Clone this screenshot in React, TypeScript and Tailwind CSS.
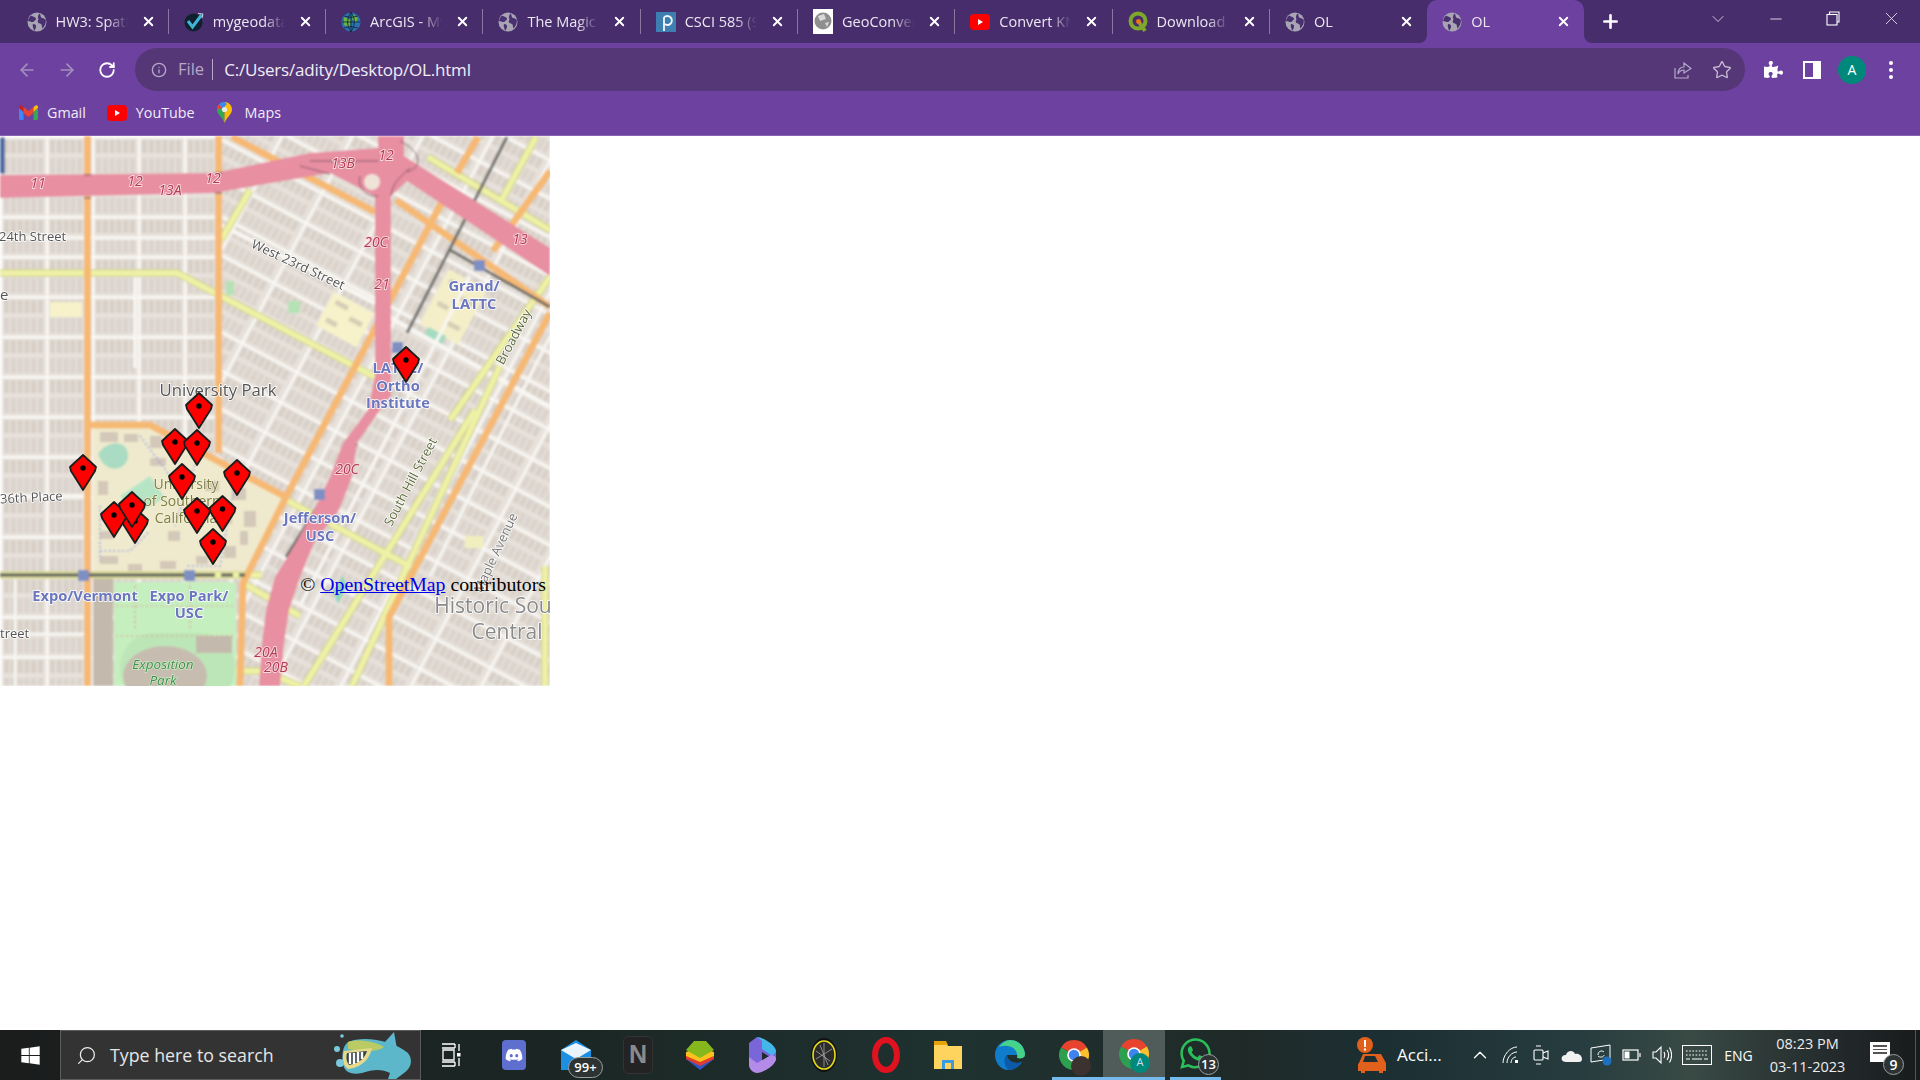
import React from 'react'
import { ArrowLeft, ArrowRight, RotateCw, Info, Star, X, Plus, ChevronDown, Minus, ChevronUp, Search } from 'lucide-react'
import { FaPuzzlePiece, FaWindows, FaDiscord, FaWhatsapp } from 'react-icons/fa'

function GlobeIcon() {
    return (
        <svg width="20" height="20" viewBox="0 0 20 20">
            <circle cx="10" cy="10" r="9.5" fill="#a9a4b3" />
            <path d="M4 3.5 C6 5 8 4.5 9 6.5 C9.5 8 7 8.5 6.5 10 C5 10.5 2.5 9 1 9 C1.5 6.5 2.5 5 4 3.5Z" fill="#4a3070" />
            <path d="M12.5 1.5 C14 2.5 13 5 15 6 C17 6.5 18 6.5 18.8 8 C19 11 18 14 15.5 16.5 C14.5 14 15.5 12.5 13 11.5 C10.5 11 10 9 11.5 7.5 C10.5 5 11 3 12.5 1.5Z" fill="#4a3070" />
            <path d="M6 12 C8 12 9.5 13 9 15 C8.5 17 8 18 7 18.8 C6.5 16 5 14 6 12Z" fill="#4a3070" />
        </svg>
    )
}

function YoutubeIcon() {
    return (
        <svg width="20" height="16" viewBox="0 0 20 16">
            <rect width="20" height="16" rx="4" fill="#fe0000" />
            <path d="M8 5 L13 8 L8 11Z" fill="#fff" />
        </svg>
    )
}

function ChromeIcon({ badge }: { badge: React.ReactNode }) {
    return (
        <div className="relative w-[30px] h-[36px] flex items-start">
            <svg width="30" height="36" viewBox="0 0 24 29">
                <path d="M12 12 L1.6 6 A12 12 0 0 1 22.4 6Z" fill="#e8432f" transform="translate(0,2.5)" />
                <path d="M12 12 L22.4 6 A12 12 0 0 1 12 24Z" fill="#fbc02d" transform="translate(0,2.5)" />
                <path d="M12 12 L12 24 A12 12 0 0 1 1.6 6Z" fill="#2e9e4f" transform="translate(0,2.5)" />
                <circle cx="12" cy="14.5" r="5.5" fill="#fff" />
                <circle cx="12" cy="14.5" r="4.2" fill="#3f83ee" />
            </svg>
            {badge}
        </div>
    )
}

const tabs = [
    {
        title: 'HW3: Spatial',
        icon: <GlobeIcon />,
    },
    {
        title: 'mygeodata',
        icon: (
            <svg width="20" height="20" viewBox="0 0 20 20">
                <circle cx="9.5" cy="10.5" r="9" fill="#10202c" />
                <path d="M4 9 L8.5 15 L17.5 3" fill="none" stroke="#40b5d8" strokeWidth="3" />
                <path d="M14 1.5 L19 2 L18 6" fill="none" stroke="#cfd8dc" strokeWidth="1" />
            </svg>
        ),
    },
    {
        title: 'ArcGIS - My',
        icon: (
            <svg width="20" height="22" viewBox="0 0 20 22">
                <circle cx="10" cy="11" r="9.5" fill="#2b74b4" />
                <path d="M3 6 L10 9 L9 16 L3 14Z M12 3 L17 7 L15 12 L11 8Z" fill="#6cb33f" />
                <path d="M1 11 H19 M10 1 V21 M3 5 Q10 8 17 5 M3 17 Q10 14 17 17 M10 1 Q3 11 10 21 M10 1 Q17 11 10 21" fill="none" stroke="#10222e" strokeWidth="0.8" />
            </svg>
        ),
    },
    {
        title: 'The Magic',
        icon: <GlobeIcon />,
    },
    {
        title: 'CSCI 585 (9',
        icon: (
            <svg width="20" height="20" viewBox="0 0 20 20">
                <rect width="20" height="20" fill="#3d7fb0" />
                <path d="M8 19 V5.5 A4.5 4.5 0 1 1 8 11.5" fill="none" stroke="#f2f6f9" strokeWidth="1.8" />
            </svg>
        ),
    },
    {
        title: 'GeoConverter',
        icon: (
            <svg width="20" height="25" viewBox="0 0 20 25">
                <rect width="20" height="25" fill="#fff" />
                <circle cx="10" cy="12" r="8.5" fill="#8f8f8f" />
                <path d="M5 7 L11 5 L13 10 L7 12Z M12 14 L16 13 L14 18Z" fill="#d9d9d9" />
            </svg>
        ),
    },
    {
        title: 'Convert KML',
        icon: <YoutubeIcon />,
    },
    {
        title: 'Download QGIS',
        icon: (
            <svg width="20" height="22" viewBox="0 0 20 22">
                <circle cx="10" cy="10" r="7.5" fill="none" stroke="#7ea82a" strokeWidth="4" />
                <path d="M11 11 L17 20" stroke="#7ea82a" strokeWidth="4" />
                <circle cx="10.5" cy="10.5" r="2.4" fill="#ee7913" />
            </svg>
        ),
    },
    {
        title: 'OL',
        icon: <GlobeIcon />,
    },
    {
        title: 'OL',
        icon: <GlobeIcon />,
        active: true,
    },
]

function TabItem({ title, icon, active, last }: { title: string; icon: React.ReactNode; active?: boolean; last?: boolean }) {
    return (
        <div className={active
            ? 'relative w-[157.3px] h-full flex items-center pl-[15px] bg-[#6c41a0] rounded-t-[10px]'
            : 'relative w-[157.3px] h-full flex items-center pl-[15px]'}
        >
            {active && (
                <>
                    <div className="absolute -left-2 bottom-0 size-2 bg-[#6c41a0]">
                        <div className="size-full bg-[#472d6b] rounded-br-lg" />
                    </div>
                    <div className="absolute -right-2 bottom-0 size-2 bg-[#6c41a0]">
                        <div className="size-full bg-[#472d6b] rounded-bl-lg" />
                    </div>
                </>
            )}
            <div className="w-5 flex justify-center shrink-0 overflow-visible">{icon}</div>
            <div className="ml-[9px] w-[72px] overflow-hidden whitespace-nowrap text-[14.5px] text-[#ece7f2] [mask-image:linear-gradient(to_right,black_70%,transparent)]">
                {title}
            </div>
            <X size={15} strokeWidth={3} className="ml-[13px] text-white shrink-0" />
            {!last && !active && <div className="absolute right-0 top-[9px] h-[25px] w-px bg-[#8a779f]" />}
        </div>
    )
}

const streets: [string, string, number][] = [
    ['M0 102H216', '#f8f6f2', 3.5],
    ['M135 140V232', '#f8f6f2', 3.5],
    ['M0 360H85', '#f8f6f2', 3.5],
    ['M221 89L375 167', '#f8f6f2', 4.5],
    ['M389 181L550 271', '#f8f6f2', 4.5],
    ['M0 498H85', '#f8f6f2', 3],
    ['M15 440V550', '#f8f6f2', 2.5],
    ['M470 140L300 470', '#f8f6f2', 3.5],
    ['M550 200L430 440', '#f8f6f2', 3],
]

const yellowRoads = [
    'M0 137H177L375 241',
    'M286 364L411 431',
    'M250 54L221 104',
    'M428 21L550 94',
    'M536 1L500 67',
    'M550 141L450 284',
    'M475 274L304 550',
    'M500 230L352 550',
    'M0 439H262',
    'M545 430V550',
    'M241 446L300 480',
    'M236 535H262L300 550',
]

const orangeRoads = [
    'M87.5 0V550',
    'M218.6 0V317',
    'M87 289H150L286 361',
    'M443 64L286 361L243 447L240 550',
    'M232 1L375 76',
    'M396 64L550 171',
    'M478 1L457 37',
    'M550 35L493 115',
    'M550 177L389 481V550',
]

const pinkLabels: [string, number, number][] = [
    ['11', 38, 52], ['12', 135, 50], ['13A', 170, 59], ['12', 213, 47], ['13B', 343, 32], ['12', 386, 24],
    ['13', 520, 108], ['20C', 376, 111], ['21', 382, 153], ['20C', 347, 338], ['20A', 266, 521], ['20B', 276, 536],
]

const blueLabels: [string, number, number][] = [
    ['Grand/', 474, 155], ['LATTC', 474, 173], ['LATTC/', 398, 237], ['Ortho', 398, 255], ['Institute', 398, 272],
    ['Jefferson/', 320, 387], ['USC', 320, 405], ['Expo/Vermont', 85, 465], ['Expo Park/', 189, 465], ['USC', 189, 482],
]

const markers: [number, number][] = [
    [406, 224], [199, 270], [83, 332], [175, 306], [197, 307], [182, 341], [237, 337], [135, 385], [114, 379], [132, 369], [197, 375], [222.5, 373], [213, 406],
]

const campusBuildings: [number, number, number, number][] = [
    [100, 296, 18, 10], [124, 298, 14, 8], [150, 300, 12, 12], [98, 345, 10, 14], [150, 322, 16, 8], [205, 345, 14, 10],
    [232, 352, 14, 12], [218, 372, 14, 16], [244, 375, 12, 16], [100, 395, 14, 8], [100, 420, 18, 8], [128, 428, 14, 7],
    [160, 425, 16, 8], [224, 410, 12, 12], [240, 395, 8, 14], [196, 420, 12, 8], [168, 395, 12, 10], [150, 350, 10, 6],
]

function parcels(w: number, h: number) {
    const out: React.ReactNode[] = []
    const count = Math.floor((w - 4) / 6.8)
    for (let c = 0; c < count; c++) {
        out.push(<rect key={'a' + c} x={4 + c * 6.8} y={4} width="5" height={h / 2 - 7} fill="#d8d0c8" />)
        out.push(<rect key={'b' + c} x={4 + c * 6.8} y={h / 2 + 2} width="5" height={h / 2 - 5} fill="#dbd3cc" />)
    }
    return out
}

function MapDrawing() {
    return (
        <svg width="550" height="550" viewBox="0 0 550 550" className="block font-['Open_Sans']">
            <defs>
                <pattern id="blocks" width="46" height="40" patternUnits="userSpaceOnUse">
                    <rect width="46" height="40" fill="#e6e1da" />
                    {parcels(46, 40)}
                    <path d="M0 1H46M1 0V40" stroke="#fbf9f6" strokeWidth="2.8" />
                </pattern>
                <pattern id="blocksTilt" width="62" height="34" patternUnits="userSpaceOnUse" patternTransform="rotate(28)">
                    <rect width="62" height="34" fill="#e6e1da" />
                    {parcels(62, 34)}
                    <path d="M0 1H62M1 0V34" stroke="#fbf9f6" strokeWidth="2.8" />
                </pattern>
                <filter id="soft">
                    <feGaussianBlur stdDeviation="0.8" />
                </filter>
                <filter id="softer">
                    <feGaussianBlur stdDeviation="0.35" />
                </filter>
            </defs>
            <g filter="url(#soft)">
                <rect width="550" height="550" fill="url(#blocks)" />
                <polygon points="221,0 550,0 550,550 240,550 243,447 286,361 219,320" fill="url(#blocksTilt)" />
                <polygon points="93,292 150,292 219,325 286,361 245,440 93,440" fill="#efeacd" />
                {campusBuildings.map(([x, y, w, h]) => (
                    <rect key={x + '-' + y} x={x} y={y} width={w} height={h} fill="#d4c8b8" />
                ))}
                <path d="M98 318C108 302 130 304 128 322C124 336 105 338 98 318Z" fill="#a9dcc3" />
                <path d="M120 360L150 340L165 362L135 378Z" fill="#b6e5c6" />
                <path d="M100 415H130L150 395M140 300L170 340M235 345L220 430H185M100 370V425M200 312L175 390" stroke="#6f7ff0" strokeWidth="1.6" strokeDasharray="1.5 3" fill="none" />
                <g transform="rotate(28 454 170)">
                    <rect x="432" y="140" width="44" height="62" fill="#f4efc8" />
                    <path d="M438 150H452M456 160H470M438 175H450M455 188H470" stroke="#d8cdb6" strokeWidth="5" />
                </g>
                <g transform="rotate(28 344 184)">
                    <rect x="322" y="164" width="46" height="38" fill="#f7f2c9" />
                    <path d="M328 172H342M348 180H362M328 192H340" stroke="#d8cdb6" strokeWidth="5" />
                </g>
                <rect x="50" y="166" width="32" height="15" fill="#f7f2c9" />
                <rect x="425" y="195" width="20" height="11" fill="#a3dcc1" transform="rotate(28 435 200)" />
                <rect x="226" y="145" width="8" height="14" fill="#b5e2b4" />
                <rect x="288" y="165" width="12" height="12" fill="#b5e2b4" />
                <rect x="93" y="442" width="20" height="108" fill="#c4b9ad" />
                <rect x="114" y="446" width="122" height="104" fill="#c6efc0" />
                <rect x="120" y="497" width="115" height="70" rx="34" fill="#bde6b8" />
                <ellipse cx="165" cy="540" rx="42" ry="30" fill="#c7bcb0" />
                <rect x="196" y="500" width="36" height="17" fill="#c4b9ad" />
                <path d="M116 470H235M135 450V495M190 450V495M116 500H235" stroke="#dd8d80" strokeWidth="1.2" strokeDasharray="2 3" fill="none" />
                <path d="M333 455L343 440L347 450L338 468Z" fill="#8fd6bc" />
                <rect x="465" y="400" width="18" height="12" fill="#f2efbf" />
                {streets.map(([d, color, width]) => (
                    <path key={d} d={d} stroke={color} strokeWidth={width} fill="none" />
                ))}
                {yellowRoads.map((d) => (
                    <path key={d} d={d} stroke="#cdcf86" strokeWidth="7.5" fill="none" />
                ))}
                {yellowRoads.map((d) => (
                    <path key={d + 'in'} d={d} stroke="#eef1a6" strokeWidth="5.5" fill="none" />
                ))}
                {orangeRoads.map((d) => (
                    <path key={d} d={d} stroke="#f6b973" strokeWidth="7" fill="none" />
                ))}
                <path d="M0 439H245" stroke="#666660" strokeWidth="3.5" fill="none" strokeDasharray="215 6 12 6" />
                <path d="M507 1L407 197M450 114L550 171M357 307L286 421" stroke="#6f6f6c" strokeWidth="3" fill="none" />
                <path d="M0 39L214 37L310 17L378 12L378 0H404L404 20L550 112V140L407 45L391 60V260L380 274L357 307L352 341L339 374L314 407L300 441L289 474L284 507L280 550H259L262 507L266 474L275 441L296 407L314 374L330 341L343 307L368 274L375 240V60L330 37L214 57L0 62Z" fill="#e88fa2" />
                <path d="M310 25H378M330 38L300 30M360 40C356 55 372 62 378 60M410 32C396 44 392 50 391 60M400 5C420 15 425 30 407 36" stroke="#7c5460" strokeWidth="1" fill="none" />
                <path d="M84 39H91M84 62H91M215 37H222M215 57H222" stroke="#9c6a70" strokeWidth="1.5" />
                <circle cx="372" cy="46" r="8" fill="#efe3d8" />
                {[[474, 124], [392, 206], [314, 353], [78, 434], [184, 434]].map(([x, y]) => (
                    <rect key={x} x={x} y={y} width="11" height="11" fill="#7e8fc4" />
                ))}
                <rect x="0" y="1" width="5" height="37" rx="2" fill="#4f6da3" />
            </g>
            <g filter="url(#softer)">
                <g textAnchor="middle" fontStyle="italic" fontSize="14" fill="#b13a50" stroke="#f8d7dd" strokeWidth="1.8" paintOrder="stroke">
                    {pinkLabels.map(([t, x, y]) => (
                        <text key={t + x} x={x} y={y}>{t}</text>
                    ))}
                </g>
                <g textAnchor="middle" fontSize="14.7" fontWeight="700" fill="#6a76bd" stroke="#ffffff" strokeWidth="1.6" paintOrder="stroke">
                    {blueLabels.map(([t, x, y]) => (
                        <text key={t + x + y} x={x} y={y}>{t}</text>
                    ))}
                </g>
                <g fill="#555" stroke="#fff" strokeWidth="1.5" paintOrder="stroke" fontSize="13">
                    <text x="-1" y="105">24th Street</text>
                    <text x="0" y="164" fontSize="15">e</text>
                    <text x="298" y="133" textAnchor="middle" transform="rotate(25 298 129)">West 23rd Street</text>
                    <text x="0" y="366" transform="rotate(-3 30 362)">36th Place</text>
                    <text x="0" y="502">treet</text>
                    <text x="411" y="350" textAnchor="middle" transform="rotate(-62 411 346)" fill="#5f6b3a">South Hill Street</text>
                    <text x="514" y="205" textAnchor="middle" transform="rotate(-62 514 201)" fill="#5f6b3a">Broadway</text>
                    <text x="496" y="421" textAnchor="middle" transform="rotate(-65 496 417)" fill="#777">Maple Avenue</text>
                    <text x="218" y="260" textAnchor="middle" fontSize="16.7">University Park</text>
                    <text x="493" y="477" textAnchor="middle" fontSize="21" fill="#8a8a8a">Historic Sou</text>
                    <text x="507" y="503" textAnchor="middle" fontSize="21" fill="#8a8a8a">Central</text>
                </g>
                <g textAnchor="middle" fontSize="14" fill="#7b7d46" stroke="#f7f2d8" strokeWidth="1.2" paintOrder="stroke">
                    <text x="186" y="353">University</text>
                    <text x="182" y="370">of Southern</text>
                    <text x="186" y="387">California</text>
                </g>
                <g textAnchor="middle" fontSize="13.5" fontStyle="italic" fill="#3f8f4a" stroke="#d4f2cf" strokeWidth="1.2" paintOrder="stroke">
                    <text x="163" y="533">Exposition</text>
                    <text x="163" y="549">Park</text>
                </g>
                {markers.map(([x, y]) => (
                    <g key={x + '-' + y} transform={`translate(${x} ${y})`}>
                        <path d="M0 -13L13 -1L12 3L0 22L-12 3L-13 -1Z" fill="#ff0000" stroke="#1c1c1c" strokeWidth="1.8" strokeLinejoin="round" />
                        <circle r="2.7" fill="#000" />
                    </g>
                ))}
            </g>
        </svg>
    )
}

function Shark() {
    return (
        <svg width="84" height="50" viewBox="0 0 84 50">
            <path d="M60 3L63 20L50 14Z" fill="#5fb8cf" />
            <path d="M14 13C30 6 60 12 74 24C80 32 76 40 70 44L62 50H54L56 44C48 40 40 40 28 44C18 46 10 44 9 34C8 26 8 18 14 13Z" fill="#5cb7cb" />
            <path d="M14 13C24 10 40 12 50 18C42 24 24 22 14 20Z" fill="#b9cb62" />
            <path d="M10 22L38 19C36 28 30 38 14 40C8 36 8 28 10 22Z" fill="#e5d98c" />
            <path d="M13 24L33 22C31 28 27 34 15 36C12 32 12 28 13 24Z" fill="#33424a" />
            <path d="M16 24V35M20 24V35M24 23V33M28 23V30" stroke="#fff" strokeWidth="2.4" />
            <circle cx="3" cy="20" r="3" fill="#79c8dc" />
            <circle cx="6" cy="34" r="4" fill="#79c8dc" />
            <circle cx="8" cy="7" r="1.8" fill="#79c8dc" />
        </svg>
    )
}

function Slot({ children, w = 'w-[62px]', className = '' }: { children: React.ReactNode; w?: string; className?: string }) {
    return <div className={`${w} ${className} relative h-full flex items-center justify-center shrink-0`}>{children}</div>
}

function CountBadge({ text, className }: { text: string; className: string }) {
    return (
        <div className={`absolute flex items-center justify-center rounded-full border border-[#9aa0a0] bg-[#2c3332] text-white font-semibold leading-none ${className}`}>
            {text}
        </div>
    )
}

export default function App() {
    return (
        <div className="w-[1920px] h-[1080px] overflow-hidden flex flex-col bg-white font-['Open_Sans',sans-serif]">
            {/* tab strip */}
            <div className="h-[43px] bg-[#472d6b] flex items-stretch pl-[11.5px] shrink-0">
                {tabs.map((t, i) => (
                    <TabItem key={i} title={t.title} icon={t.icon} active={t.active} last={i === 8} />
                ))}
                <div className="w-[54px] flex items-center justify-center">
                    <Plus size={21} strokeWidth={3} className="text-white ml-[-1px]" />
                </div>
                <div className="ml-auto flex items-center text-[#e8e3ef]">
                    <div className="w-[58px] flex justify-center mb-[6px]"><ChevronDown size={20} strokeWidth={1} /></div>
                    <div className="w-[57px] flex justify-center mb-[6px]"><Minus size={18} strokeWidth={1.2} /></div>
                    <div className="w-[58px] flex justify-center mb-[6px]">
                        <svg width="14" height="15" viewBox="0 0 14 15" fill="none" stroke="#fff" strokeWidth="1.1">
                            <rect x="1" y="3.5" width="10" height="10.5" />
                            <path d="M3.5 3.5V1H13V11H11" />
                        </svg>
                    </div>
                    <div className="w-[58px] flex justify-center mb-[6px]"><X size={21} strokeWidth={1} /></div>
                </div>
            </div>

            {/* toolbar */}
            <div className="h-[48px] bg-[#6c41a0] flex items-end shrink-0 text-white">
                <div className="h-[43px] flex items-center">
                    <div className="w-[40px] ml-[7px] flex justify-center"><ArrowLeft size={20} className="text-[#a390bf]" /></div>
                    <div className="w-[40px] flex justify-center"><ArrowRight size={20} className="text-[#a390bf]" /></div>
                    <div className="w-[40px] flex justify-center"><RotateCw size={18} strokeWidth={2.4} /></div>
                </div>
                <div className="ml-[8px] w-[1610px] h-[43px] bg-[#553778] rounded-full flex items-center pl-[16px]">
                    <Info size={16} className="text-[#b5a9c7]" />
                    <span className="ml-[11px] text-[16.5px] text-[#b5a9c7]">File</span>
                    <div className="ml-[8px] h-[21px] w-px bg-[#b5a9c7]" />
                    <span className="ml-[11px] text-[17px] text-[#f1edf6] tracking-[-0.2px]">C:/Users/adity/Desktop/OL.html</span>
                    <svg width="20" height="20" viewBox="0 0 20 20" fill="none" stroke="#b5a9c7" strokeWidth="1.2" className="ml-auto">
                        <path d="M3 8V18H16V15" />
                        <path d="M6 14C6 9 9 7 12 7V3L19 8.5L12 13V10C9.5 10 7.5 11 6 14Z" />
                    </svg>
                    <Star size={20} strokeWidth={1.6} className="ml-[20px] mr-[13px] text-[#c7bcd6]" />
                </div>
                <div className="h-[43px] flex-1 flex items-center pl-[19px]">
                    <FaPuzzlePiece size={19} />
                    <div className="ml-[20px] w-[18px] h-[18px] border-2 border-white border-r-[8px]" />
                    <div className="ml-[17px] w-[28px] h-[28px] rounded-full bg-[#00897b] flex items-center justify-center text-[14px]">A</div>
                    <div className="ml-[23px] flex flex-col gap-[3px]">
                        <div className="size-[4px] rounded-full bg-white" />
                        <div className="size-[4px] rounded-full bg-white" />
                        <div className="size-[4px] rounded-full bg-white" />
                    </div>
                </div>
            </div>

            {/* bookmarks */}
            <div className="h-[45px] bg-[#6c41a0] border-b border-[#8763b3] flex items-center pl-[19px] pb-[1px] text-[14.3px] text-[#f1edf6] shrink-0">
                <svg width="19" height="15" viewBox="0 0 19 15">
                    <path d="M0 3V13.5C0 14.3 .6 15 1.5 15H4.5V7Z" fill="#4285f4" />
                    <path d="M14.5 7V15H17.5C18.4 15 19 14.3 19 13.5V3Z" fill="#34a853" />
                    <path d="M0 3L4.5 7V2L2.5 .5C1.5 -.2 0 .5 0 2Z" fill="#c5221f" />
                    <path d="M4.5 2V8L9.5 12L14.5 8V2L9.5 6Z" fill="#ea4335" />
                    <path d="M14.5 2V7L19 3V2C19 .5 17.5 -.2 16.5 .5Z" fill="#fbbc04" />
                </svg>
                <span className="ml-[9px]">Gmail</span>
                <div className="ml-[21px]"><YoutubeIcon /></div>
                <span className="ml-[9px]">YouTube</span>
                <svg width="15" height="21" viewBox="0 0 15 21" className="ml-[22px]">
                    <path d="M7.5 0C3.3 0 0 3.3 0 7.5C0 12 5 15 7.5 21Z" fill="#34a853" />
                    <path d="M7.5 0C11.7 0 15 3.3 15 7.5C15 12 10 15 7.5 21Z" fill="#fbbc04" />
                    <path d="M2 2.5C3.3 1 5.3 0 7.5 0L10 2L5 7Z" fill="#4285f4" />
                    <path d="M0 7.5C0 5.5 .8 3.8 2 2.5L5 6Z" fill="#ea4335" />
                    <circle cx="7.5" cy="7.5" r="2.6" fill="#e8eaed" />
                </svg>
                <span className="ml-[13px]">Maps</span>
            </div>

            {/* page */}
            <div className="relative flex-1 bg-white">
                <MapDrawing />
                <div className="absolute left-0 top-[436px] w-[546px] text-right font-['Liberation_Serif',serif] text-[19.8px] leading-[24px] text-black">
                    © <a className="text-[#0000ee] underline">OpenStreetMap</a> contributors
                </div>
            </div>

            {/* taskbar */}
            <div className="h-[50px] flex items-stretch shrink-0 text-white bg-[linear-gradient(90deg,#1b1d1d_0%,#1b2725_30%,#1f3230_50%,#1f2a28_65%,#1c2f33_72%,#263c3f_82%,#394a45_88%,#22282a_96%,#191b1c_100%)]">
                <div className="w-[60px] flex items-center justify-center">
                    <FaWindows size={21} />
                </div>
                <div className="w-[361px] bg-[#333333] border border-[#5c5c5c] flex items-center pl-[15px] relative">
                    <Search size={21} strokeWidth={1.4} className="-scale-x-100 text-[#ececec]" />
                    <span className="ml-[13px] text-[17.8px] text-[#e6e6e6]">Type here to search</span>
                    <div className="absolute right-[2px] bottom-0"><Shark /></div>
                </div>
                <div className="flex items-center">
                    <Slot>
                        <svg width="20" height="24" viewBox="0 0 20 24" fill="none" stroke="#fff" strokeWidth="1.3">
                            <path d="M0 1H13M13 1V5M0 5H13M1 7H12V17H1ZM0 19H13M0 23H13M13 19V23" />
                            <path d="M17 1V8M17 15V23" />
                            <rect x="15" y="10" width="3.5" height="3.5" fill="#fff" stroke="none" />
                        </svg>
                    </Slot>
                    <Slot>
                        <div className="w-[24px] h-[30px] bg-[#5f6fd0] rounded-[4px] flex items-center justify-center">
                            <FaDiscord size={18} />
                        </div>
                    </Slot>
                    <Slot>
                        <svg width="30" height="30" viewBox="0 0 30 30">
                            <path d="M0 10L15 0L30 10V30H0Z" fill="#1c8fe3" />
                            <path d="M0 10L15 19L30 10L15 3Z" fill="#eaf4fc" />
                        </svg>
                        <CountBadge text="99+" className="left-[23px] top-[27px] w-[35px] h-[21px] text-[13px]" />
                    </Slot>
                    <Slot>
                        <div className="w-[30px] h-[38px] bg-[#232323] border border-[#333] rounded-[5px] flex items-center justify-center text-[#8b8b8b] font-bold text-[25px] font-['Liberation_Sans']">N</div>
                    </Slot>
                    <Slot>
                        <svg width="28" height="30" viewBox="0 0 28 30">
                            <path d="M14 12L28 19L14 30L0 19Z" fill="#3454c9" />
                            <path d="M14 10L28 15V19L14 26L0 19V15Z" fill="#e03d2f" />
                            <path d="M14 7L28 12V16L14 22L0 16V12Z" fill="#fbc21b" />
                            <path d="M8 1H20L28 10L14 18L0 10Z" fill="#86b81e" />
                        </svg>
                    </Slot>
                    <Slot>
                        <svg width="27" height="36" viewBox="0 0 27 36">
                            <path d="M8 0L22 7L27 14V24L13 15V25L20 21L8 36L0 28V6Z" fill="#7a66d8" />
                            <path d="M8 0C14 0 27 8 27 14C27 16 25 18 22 18L13 12V4Z" fill="#45b6ea" />
                            <path d="M0 20V28C0 32 4 36 8 36C14 36 27 28 27 22C27 20 25 18 22 18L8 26Z" fill="#b48be8" />
                        </svg>
                    </Slot>
                    <Slot>
                        <svg width="28" height="36" viewBox="0 0 28 36">
                            <ellipse cx="14" cy="18" rx="13" ry="17" fill="#111" />
                            <ellipse cx="14" cy="18" rx="11" ry="14" fill="#2b2b2b" stroke="#e6dc1c" strokeWidth="1.6" />
                            <path d="M6 14L20 24M10 8L18 28M6 22L22 12M14 6V30" stroke="#a4a4a4" strokeWidth="0.8" />
                        </svg>
                    </Slot>
                    <Slot>
                        <svg width="28" height="36" viewBox="0 0 28 36">
                            <ellipse cx="14" cy="18" rx="11" ry="15" fill="none" stroke="#e0121f" strokeWidth="6" />
                        </svg>
                    </Slot>
                    <Slot>
                        <svg width="28" height="28" viewBox="0 0 28 28">
                            <path d="M0 2H12L14 5H28V28H0Z" fill="#ffd45e" />
                            <path d="M0 0H12L14 4H0Z" fill="#e6a30a" />
                            <path d="M8 28V19H20V28H17V22H11V28Z" fill="#3b9be0" />
                        </svg>
                    </Slot>
                    <Slot>
                        <svg width="30" height="36" viewBox="0 0 30 36">
                            <path d="M15 3C24 3 30 10 30 18H12C12 24 20 28 27 25C23 31 18 33 13 33C6 33 0 26 0 18C0 10 6 3 15 3Z" fill="#0f7dcb" />
                            <path d="M15 3C24 3 30 10 30 18C30 21 26 22 22 21C24 12 14 6 4 10C7 6 11 3 15 3Z" fill="#47d28a" />
                            <path d="M12 18C12 24 20 28 27 25C23 31 18 33 13 33C9 28 8 21 12 18Z" fill="#0d5ba8" />
                        </svg>
                    </Slot>
                    <Slot className="after:absolute after:bottom-0 after:left-[14px] after:w-[51px] after:h-[3px] after:bg-[#76b9ed] !w-[65px] pl-[6px] -ml-[3px]">
                        <ChromeIcon badge={<div className="absolute left-[12px] top-[19px] size-[20px] rounded-full bg-[#3c3230]" />} />
                    </Slot>
                    <Slot className="bg-[#4f5c5a] border-b-[3px] border-[#76b9ed]">
                        <ChromeIcon badge={<div className="absolute left-[11px] top-[17px] size-[20px] rounded-full bg-[#00897b] flex items-center justify-center text-[11px] text-[#cde]">A</div>} />
                    </Slot>
                    <Slot className="after:absolute after:bottom-0 after:left-[5px] after:w-[51px] after:h-[3px] after:bg-[#76b9ed]">
                        <FaWhatsapp size={35} className="text-white -translate-x-[1px] mb-[4px] fill-[#29c05a] stroke-white" />
                        <CountBadge text="13" className="left-[33px] top-[24px] size-[21px] text-[13px]" />
                    </Slot>
                </div>

                {/* tray */}
                <div className="ml-auto flex items-center">
                    <Slot w="w-[36px]">
                        <svg width="30" height="36" viewBox="0 0 30 36">
                            <circle cx="8" cy="8" r="8" fill="#e0601c" />
                            <rect x="7" y="3" width="2" height="7" fill="#fff" />
                            <rect x="7" y="11.5" width="2" height="2" fill="#fff" />
                            <path d="M2 26L6 17H24L29 26V34H26V36H22V34H8V36H4V34H1V27Z" fill="#e0601c" />
                            <path d="M8 19H18L21 25H6Z" fill="#1d2d30" />
                        </svg>
                    </Slot>
                    <span className="ml-[7px] w-[66px] text-[17px]">Acci...</span>
                    <Slot w="w-[33px]"><ChevronUp size={22} strokeWidth={1.4} /></Slot>
                    <Slot w="w-[30px]">
                        <svg width="18" height="18" viewBox="0 0 18 18" fill="none" stroke="#fff" strokeWidth="1">
                            <path d="M1 17C1 9 8 1 15 1M5 17C5 11 10 6 15 6M9 17C9 14 11 11 14 11" />
                            <rect x="13" y="14" width="3" height="3" fill="#fff" stroke="none" />
                        </svg>
                    </Slot>
                    <Slot w="w-[30px]">
                        <svg width="16" height="24" viewBox="0 0 16 24" fill="none" stroke="#fff" strokeWidth="1.1">
                            <rect x="1" y="7" width="9" height="10" rx="1" />
                            <path d="M10 10L15 8V16L10 14M3 3H8M3 21H8" />
                        </svg>
                    </Slot>
                    <Slot w="w-[30px]">
                        <svg width="21" height="13" viewBox="0 0 21 13">
                            <path d="M5 13C1 13 0 10 1 8C2 6 4 6 5 6C6 2 12 0 14 5C18 4 21 7 21 10C21 12 20 13 18 13Z" fill="#f1f1f1" />
                        </svg>
                    </Slot>
                    <Slot w="w-[30px]">
                        <svg width="22" height="22" viewBox="0 0 22 22" fill="none" stroke="#fff" strokeWidth="1">
                            <path d="M1 4L20 1V15L1 18Z" />
                            <path d="M8 11C8 7 12 6 14 8M14 11C14 13 10 14 8 12" />
                            <circle cx="17" cy="17" r="4.5" fill="#1e6fc0" stroke="none" />
                        </svg>
                    </Slot>
                    <Slot w="w-[30px]">
                        <svg width="19" height="12" viewBox="0 0 19 12" fill="none" stroke="#fff" strokeWidth="1.2">
                            <rect x="1" y="1" width="15" height="10" />
                            <rect x="2.5" y="2.5" width="5" height="7" fill="#fff" stroke="none" />
                            <path d="M18 4V8" />
                        </svg>
                    </Slot>
                    <Slot w="w-[31px]">
                        <svg width="20" height="20" viewBox="0 0 20 20" fill="none" stroke="#fff" strokeWidth="1.1">
                            <path d="M1 7H4L9 2V18L4 13H1Z" />
                            <path d="M12 7C13 9 13 11 12 13M15 5C17 8 17 12 15 15M17.5 2.5C20 7 20 13 17.5 17.5" />
                        </svg>
                    </Slot>
                    <Slot w="w-[39px]">
                        <svg width="30" height="20" viewBox="0 0 30 20" fill="none" stroke="#fff" strokeWidth="1">
                            <rect x="0.5" y="0.5" width="29" height="19" />
                            <path d="M4 6H26M4 10H26" strokeDasharray="1.6 1.6" />
                            <path d="M4 14H8M10 14H20M22 14H26" />
                        </svg>
                    </Slot>
                    <Slot w="w-[45px]"><span className="text-[14px]">ENG</span></Slot>
                    <div className="w-[93px] flex flex-col items-center text-[14.5px] leading-[23px] text-[#ececec]">
                        <span>08:23 PM</span>
                        <span>03-11-2023</span>
                    </div>
                    <Slot w="w-[61px]" className="pr-[9px]">
                        <div className="relative w-[20px] h-[20px] bg-white -mt-[6px] -ml-[1px] flex flex-col gap-[2px] p-[3px]">
                            <div className="h-[1.5px] bg-[#555]" />
                            <div className="h-[1.5px] bg-[#555]" />
                            <div className="h-[1.5px] bg-[#555]" />
                        </div>
                        <CountBadge text="9" className="left-[29px] top-[24px] size-[21px] text-[14px]" />
                    </Slot>
                    <div className="w-[5px] h-full border-l border-[#555]" />
                </div>
            </div>
        </div>
    )
}
